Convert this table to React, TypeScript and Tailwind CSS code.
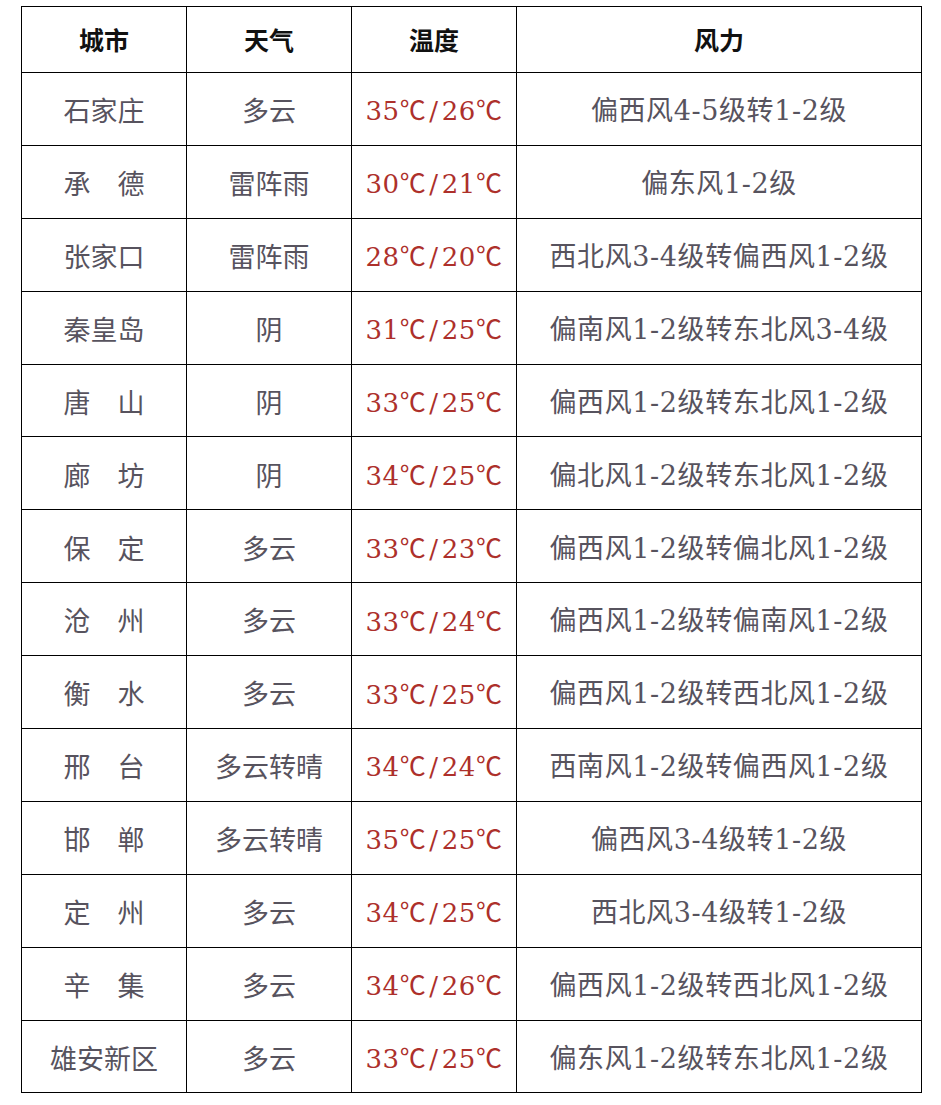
const rows: [string, string, string, string][] = [
  ['石家庄', '多云', '35℃/26℃', '偏西风4-5级转1-2级'],
  ['承　德', '雷阵雨', '30℃/21℃', '偏东风1-2级'],
  ['张家口', '雷阵雨', '28℃/20℃', '西北风3-4级转偏西风1-2级'],
  ['秦皇岛', '阴', '31℃/25℃', '偏南风1-2级转东北风3-4级'],
  ['唐　山', '阴', '33℃/25℃', '偏西风1-2级转东北风1-2级'],
  ['廊　坊', '阴', '34℃/25℃', '偏北风1-2级转东北风1-2级'],
  ['保　定', '多云', '33℃/23℃', '偏西风1-2级转偏北风1-2级'],
  ['沧　州', '多云', '33℃/24℃', '偏西风1-2级转偏南风1-2级'],
  ['衡　水', '多云', '33℃/25℃', '偏西风1-2级转西北风1-2级'],
  ['邢　台', '多云转晴', '34℃/24℃', '西南风1-2级转偏西风1-2级'],
  ['邯　郸', '多云转晴', '35℃/25℃', '偏西风3-4级转1-2级'],
  ['定　州', '多云', '34℃/25℃', '西北风3-4级转1-2级'],
  ['辛　集', '多云', '34℃/26℃', '偏西风1-2级转西北风1-2级'],
  ['雄安新区', '多云', '33℃/25℃', '偏东风1-2级转东北风1-2级'],
]

const cjk = { fontFamily: '"Noto Sans CJK SC", sans-serif' }
const latin = { fontFamily: '"DejaVu Serif", "Noto Sans CJK SC", serif' }

// digits / hyphens get a wide serif face, everything else the CJK face
function Mixed({ text }: { text: string }) {
  const parts = text.split(/([0-9\-]+|\/)/).filter(Boolean)
  return (
    <>
      {parts.map((p, i) =>
        p === '/' ? (
          <span key={i} style={latin} className="font-extralight mx-[3px]">/</span>
        ) : /^[0-9\-]+$/.test(p) ? (
          <span key={i} style={latin}>{p}</span>
        ) : (
          <span key={i} style={cjk}>{p}</span>
        )
      )}
    </>
  )
}

export default function App() {
  return (
    <div className="w-[941px] h-[1105px] bg-white pt-[6px] pl-[21px]">
      <table className="border-collapse table-fixed w-[901px]" style={cjk}>
        <colgroup>
          <col className="w-[165px]" />
          <col className="w-[165px]" />
          <col className="w-[165px]" />
          <col />
        </colgroup>
        <thead>
          <tr className="h-[66px]">
            {['城市', '天气', '温度', '风力'].map((h) => (
              <th key={h} className="border-[1.5px] border-black text-center text-[25px] font-semibold text-[#111]">
                {h}
              </th>
            ))}
          </tr>
        </thead>
        <tbody>
          {rows.map(([city, weather, temp, wind]) => (
            <tr key={city} className="h-[72.9px]">
              <td className="border-[1.5px] border-black text-center text-[27px] text-[#57535e] pt-[3px]">{city}</td>
              <td className="border-[1.5px] border-black text-center text-[27px] text-[#57535e] pt-[3px]">{weather}</td>
              <td className="border-[1.5px] border-black text-center text-[26px] text-[#ad302b] tracking-[0.6px] pt-[3px]">
                <Mixed text={temp} />
              </td>
              <td className="border-[1.5px] border-black text-center text-[27px] text-[#57535e] tracking-[0.6px] pt-[3px]">
                <Mixed text={wind} />
              </td>
            </tr>
          ))}
        </tbody>
      </table>
    </div>
  )
}
